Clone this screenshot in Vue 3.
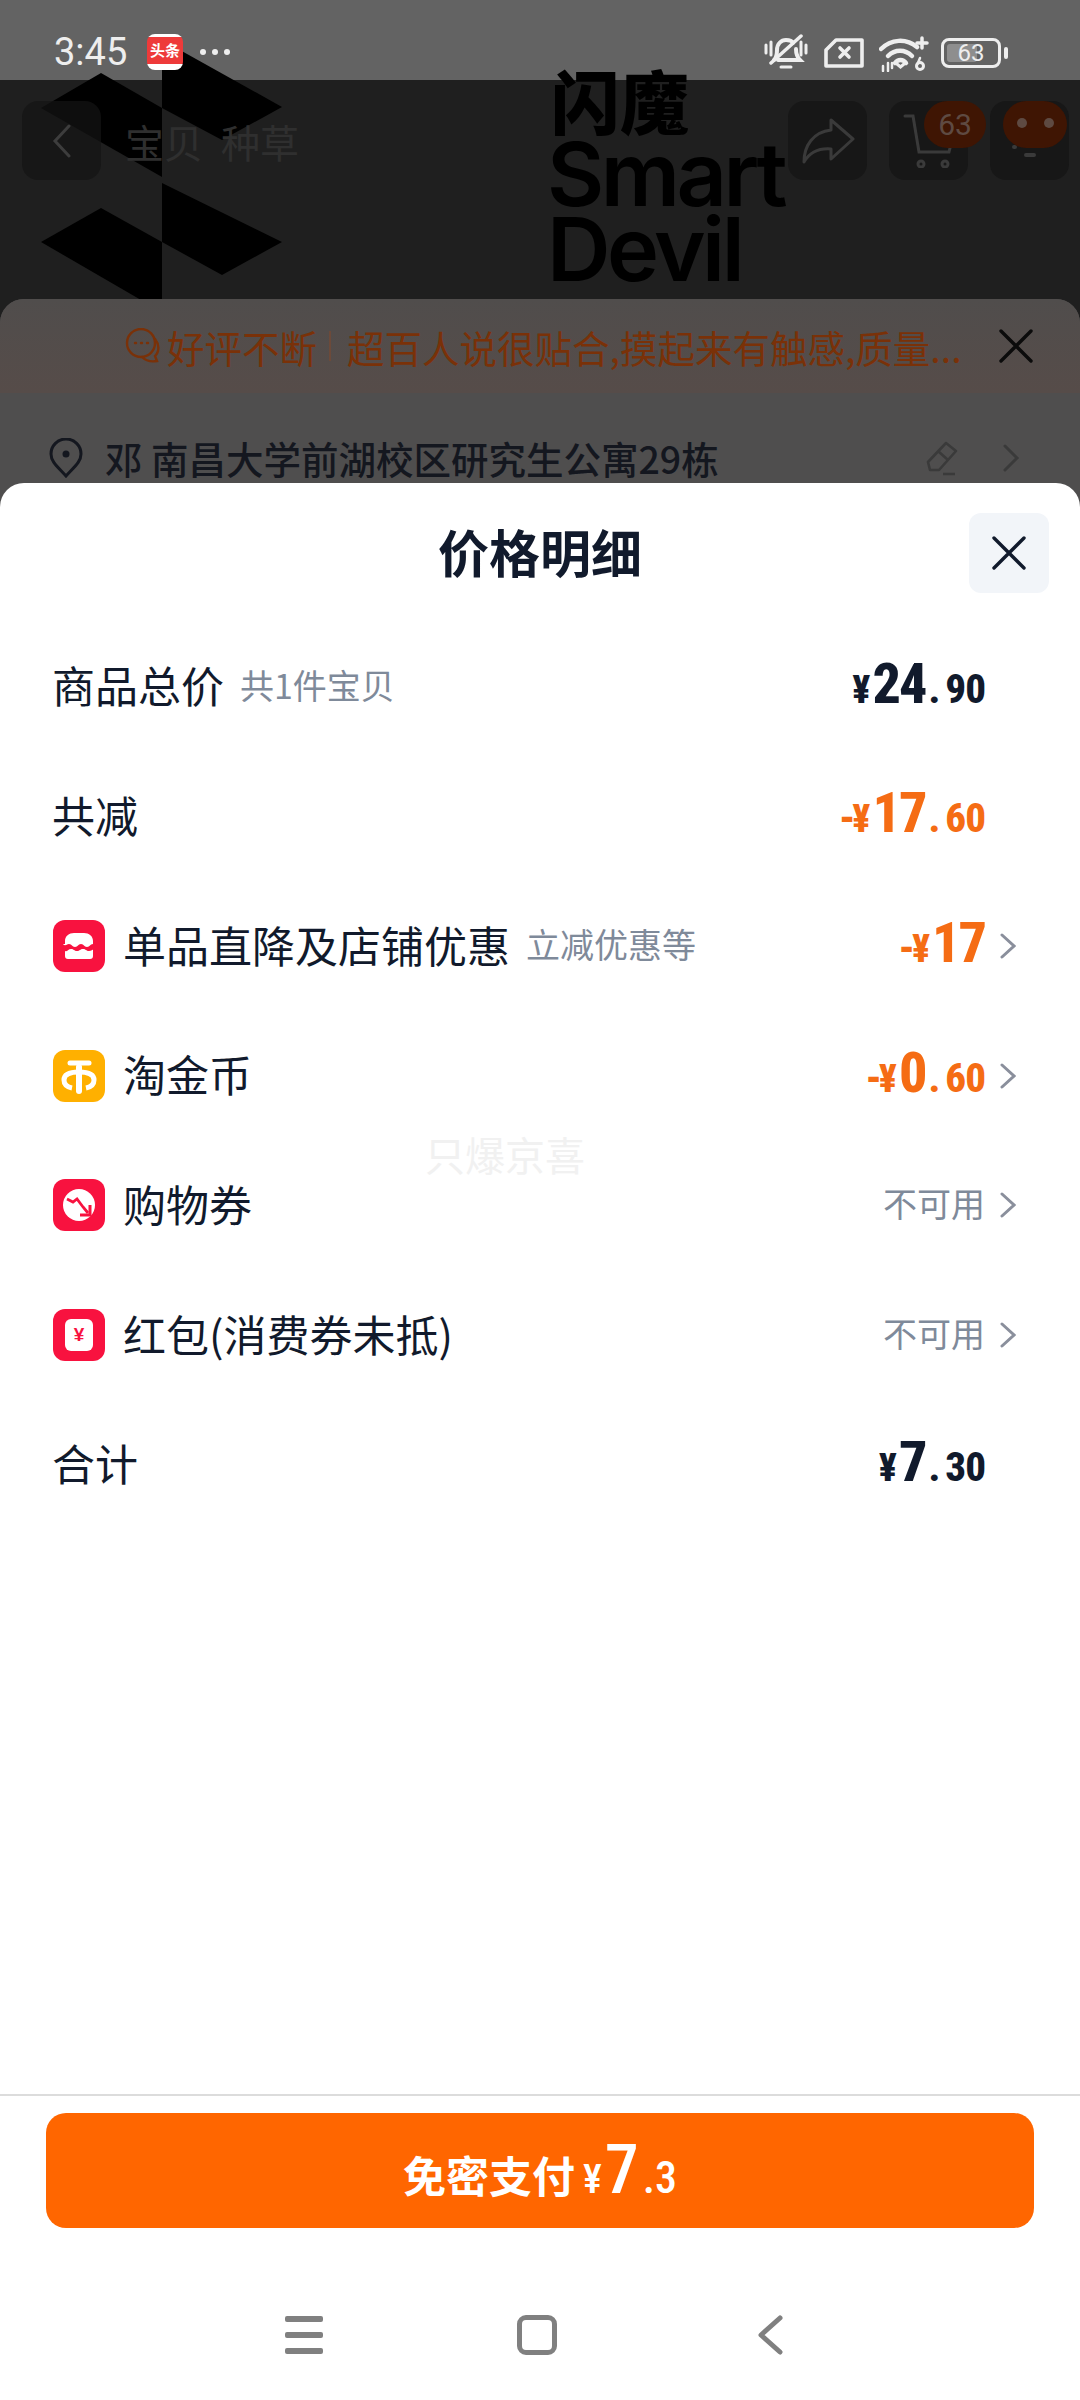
<template>
  <div class="page">
    <!-- LOGO BEHIND THE DIM LAYER -->
    <svg class="logo-mark" width="300" height="300" viewBox="0 0 300 300">
      <path d="M41 108 101 73 162 108V177Z" />
      <path d="M162 40 282 107 222 140 162 108Z" />
      <path d="M41 242 101 208 162 242V300H141Z" />
      <path d="M162 183 282 242 222 275 162 242Z" />
    </svg>
    <div class="logo-text">
      <div class="logo-cn">闪魔</div>
      <div>Smart</div>
      <div>Devil</div>
    </div>

    <!-- STATUS BAR -->
    <div class="status">
      <span class="time">3:45</span>
      <span class="app-badge"><span>头条</span></span>
      <span class="more"><i></i><i></i><i></i></span>
      <div class="status-right">
        <svg width="44" height="38" viewBox="0 0 44 38" fill="none" stroke="#eee" stroke-width="4" stroke-linecap="round">
          <path d="M2 11v8M42 11v8M7 8v13M37 8v13" stroke-width="3" />
          <path d="M10 26c3-3 3-6 3-10 0-6 4-10 9-10 3 0 6 1 7 3M32 15c0 5 1 8 4 11H14" />
          <path d="M17 33h10" stroke-width="3" />
          <path d="M7 29 37 2" stroke-width="3.5" />
        </svg>
        <svg width="40" height="31" viewBox="0 0 40 31" fill="none" stroke="#eee" stroke-width="3.6" stroke-linejoin="round">
          <path d="M2 13 12 3H38V29H2Z" />
          <path d="M16 11l9 9M25 11l-9 9" stroke-linecap="round" />
        </svg>
        <svg width="50" height="38" viewBox="0 0 50 38" fill="none" stroke="#eee" stroke-linecap="round">
          <path d="M2 15C12 5 27 4 38 13" stroke-width="4.5" />
          <path d="M9 22c7-7 17-7 24 0" stroke-width="4.5" />
          <path d="M16 29c3-4 8-4 11 0" stroke-width="4.5" />
          <path d="M18 30l3.5 3 3.500-3" stroke-width="3" />
          <path d="M38 9h10M43 4v10" stroke-width="3.5" />
          <path d="M4 32v5M9 29v8M13 29v5" stroke-width="2.5" />
          <circle cx="41" cy="32" r="3.500" stroke-width="3" />
          <path d="M41 24l-2.500 6" stroke-width="2.500" />
        </svg>
        <div class="battery">
          <span class="battery-fill"></span>
          <span class="battery-num">63</span>
        </div>
        <span class="battery-tip"></span>
      </div>
    </div>

    <!-- PAGE UNDER THE SHEET -->
    <div class="topbar">
      <div class="top-btn back">
        <svg width="26" height="34" viewBox="0 0 26 34" fill="none" stroke="#3d3d3d" stroke-width="3" stroke-linecap="round"><path d="M20 2 6 17l14 15" /></svg>
      </div>
      <div class="tabs"><span>宝贝</span><span>种草</span></div>
      <div class="top-btn">
        <svg width="54" height="46" viewBox="0 0 54 46" fill="none" stroke="#3a3a3a" stroke-width="3" stroke-linejoin="round"><path d="M30 2 52 21 30 41V31C18 30 9 34 3 44 3 28 12 14 30 12Z" /></svg>
      </div>
      <div class="top-btn cart">
        <svg width="52" height="54" viewBox="0 0 52 54" fill="none" stroke="#3a3a3a" stroke-width="3" stroke-linecap="round"><path d="M2 2h8l6 36h30l2-8" /><circle cx="18" cy="50" r="3" /><circle cx="42" cy="50" r="3" /></svg>
        <span class="badge">63</span>
      </div>
      <div class="top-btn msg">
        <svg width="60" height="60" viewBox="0 0 60 60" fill="none" stroke="#3a3a3a" stroke-width="4" stroke-linecap="round"><path d="M14 36h1M26 44h8" /></svg>
        <span class="badge blank"><i></i><i></i></span>
      </div>
    </div>

    <div class="under-card">
      <div class="review">
        <svg width="36" height="36" viewBox="0 0 36 36" fill="none" stroke="#7a3108" stroke-width="2.400" stroke-linecap="round"><circle cx="16" cy="15" r="14" /><path d="M30 11c4 5 5 12 0 17l2 5c-6 1-11 0-15-4" /><path d="M10 15h1M16 15h1M22 15h1" /></svg>
        <span class="review-tag">好评不断</span>
        <span class="review-line"></span>
        <span class="review-text">超百人说很贴合,摸起来有触感,质量...</span>
        <svg class="review-close" width="34" height="34" viewBox="0 0 34 34" stroke="#0b0b0b" stroke-width="3.400" stroke-linecap="round"><path d="M2 2 32 32M32 2 2 32" /></svg>
      </div>
      <div class="address">
        <svg width="36" height="40" viewBox="0 0 36 40" fill="none" stroke="#14171f" stroke-width="3"><path d="M18 38C10 29 3 24 3 16a15 15 0 0 1 30 0c0 8-7 13-15 22Z" /><circle cx="18" cy="16" r="3.500" fill="#14171f" stroke="none" /></svg>
        <span class="address-text">邓 南昌大学前湖校区研究生公寓29栋</span>
        <svg class="edit" width="34" height="36" viewBox="0 0 34 36" fill="none" stroke="#3a3a3a" stroke-width="2.600" stroke-linejoin="round"><path d="M21 3 31 11 14 30H5L3 22ZM13 11l10 9M18 34h12" /></svg>
        <svg class="addr-chev" width="18" height="28" viewBox="0 0 18 28" fill="none" stroke="#3a3a3a" stroke-width="3" stroke-linecap="round"><path d="M3 2 15 14 3 26" /></svg>
      </div>
    </div>

    <!-- PRICE SHEET -->
    <section class="sheet">
      <header class="sheet-head">
        <h2>价格明细</h2>
        <button class="sheet-close">
          <svg width="36" height="36" viewBox="0 0 36 36" stroke="#111a2c" stroke-width="3.400" stroke-linecap="round"><path d="M3 3 33 33M33 3 3 33" /></svg>
        </button>
      </header>

      <div class="rows">
        <div class="row" v-for="item in rows" :key="item.label">
          <span v-if="item.icon" class="ico" :class="item.icon">
            <svg v-if="item.icon === 'shop'" width="52" height="52" viewBox="0 0 52 52" fill="#fff">
              <path d="M12 24v-3c0-5 4-8 9-8h10c5 0 9 3 9 8v3c-3 0-3 3-6 3s-3-3-6-3-3 3-6 3-3-3-6-3-3 3-6 0Z" />
              <path d="M12 31c3 1 3-2 6-2s3 2 6 2 3-2 6-2 3 2 6 2 3-2 4-1v6c0 2-1 3-3 3H15c-2 0-3-1-3-3Z" />
            </svg>
            <svg v-else-if="item.icon === 'coin'" width="52" height="52" viewBox="0 0 52 52" fill="none" stroke="#fff" stroke-width="5">
              <path d="M17 13h19" stroke-linecap="round" />
              <path d="M19 38c-5-1-8-4-8-8 0-5 5-8 15-8s15 3 15 8c0 4-3 7-8 8" />
              <path d="M26 17v24" stroke-width="6" stroke-linecap="round" />
            </svg>
            <svg v-else-if="item.icon === 'ticket'" width="52" height="52" viewBox="0 0 52 52">
              <circle cx="26" cy="26" r="16" fill="#fff" />
              <path d="M14 20l6 3 4-3 6 8 5 6" fill="none" stroke="#f8123f" stroke-width="2.800" />
              <path d="M37 26v10h-10" fill="none" stroke="#f8123f" stroke-width="3" />
            </svg>
            <span v-else class="packet-card">¥</span>
          </span>

          <span class="label">{{ item.label }}</span>
          <span v-if="item.sub" class="sub">{{ item.sub }}</span>

          <span class="value" :class="{ 'no-chev': !item.chev }">
            <span v-if="item.text" class="muted">{{ item.text }}</span>
            <span v-else class="price" :class="{ off: item.off }">
              <span v-if="item.off" class="minus">-</span><span class="cur">¥</span><span class="int">{{ item.int }}</span><template v-if="item.dec"><span class="dot">.</span><span class="dec">{{ item.dec }}</span></template>
            </span>
          </span>
          <svg v-if="item.chev" class="chev" width="16" height="26" viewBox="0 0 16 26" fill="none" stroke="#8a8f9c" stroke-width="3" stroke-linecap="round"><path d="M2 2 14 13 2 24" /></svg>
        </div>
      </div>

      <div class="watermark">只爆京喜</div>

      <footer class="foot">
        <button class="pay">
          <span class="pay-label">免密支付</span>
          <span class="pay-cur">¥</span>
          <span class="pay-int">7</span>
          <span class="pay-dec">.3</span>
        </button>
        <nav class="sys-nav">
          <span class="nav-slot"><span class="burger"><i></i><i></i><i></i></span></span>
          <span class="nav-slot"><span class="square"></span></span>
          <span class="nav-slot">
            <svg width="26" height="40" viewBox="0 0 26 40" fill="none" stroke="#808080" stroke-width="5" stroke-linecap="round" stroke-linejoin="round"><path d="M23 3 4 20l19 17" /></svg>
          </span>
        </nav>
      </footer>
    </section>
  </div>
</template>

<script setup>
const rows = [
  { label: '商品总价', sub: '共1件宝贝', int: '24', dec: '90' },
  { label: '共减', off: true, int: '17', dec: '60' },
  { label: '单品直降及店铺优惠', sub: '立减优惠等', icon: 'shop', off: true, int: '17', chev: true },
  { label: '淘金币', icon: 'coin', off: true, int: '0', dec: '60', chev: true },
  { label: '购物券', icon: 'ticket', text: '不可用', chev: true },
  { label: '红包(消费券未抵)', icon: 'packet', text: '不可用', chev: true },
  { label: '合计', int: '7', dec: '30' }
]
</script>

<style scoped>
.page {
  position: relative;
  width: 1080px;
  height: 2400px;
  overflow: hidden;
  background: linear-gradient(#636363 80px, #1f1f1f 80px);
  font-family: "Noto Sans CJK SC", "Noto Sans", sans-serif;
  color: #111a2c;
}

/* LOGO */
.logo-mark {
  position: absolute;
  top: 0;
  left: 0;
  fill: #000;
}

.logo-text {
  position: absolute;
  top: 62px;
  left: 547px;
  font-family: Inter, sans-serif;
  font-weight: 600;
  font-size: 88px;
  line-height: 75px;
  letter-spacing: -3.500px;
  color: #000;
}

.logo-cn {
  font-family: "Noto Sans CJK SC", sans-serif;
  font-weight: 900;
  font-size: 69px;
  letter-spacing: 0;
  margin-left: 4px;
}

/* STATUS BAR */
.status {
  position: relative;
  height: 80px;
  display: flex;
  align-items: center;
  padding: 0 72px 0 54px;
  box-sizing: border-box;
  color: #eee;
}

.time {
  font-family: Roboto, sans-serif;
  font-size: 38px;
  width: 93px;
  margin-top: 23px;
}

.app-badge {
  width: 36px;
  height: 36px;
  margin-top: 23px;
  border-radius: 8px;
  background: linear-gradient(#fff 3px, #ee3a3a 3px, #ee3a3a 30px, #fff 30px);
  display: flex;
  align-items: flex-start;
  justify-content: center;
}

.app-badge span {
  color: #fff;
  font-size: 15px;
  font-weight: 700;
  line-height: 32px;
}

.more {
  display: flex;
  gap: 6px;
  margin: 23px 0 0 17px;
}

.more i {
  width: 6px;
  height: 6px;
  border-radius: 50%;
  background: #eee;
}

.status-right {
  display: flex;
  align-items: center;
  margin: 25px 0 0 auto;
}

.status-right svg:nth-child(2) {
  margin: 0 15px 0 16px;
}

.battery {
  position: relative;
  width: 60px;
  height: 30px;
  margin-left: 12px;
  border: 3px solid #eee;
  border-radius: 8px;
  box-sizing: border-box;
}

.battery-fill {
  position: absolute;
  top: 3px;
  left: 3px;
  width: 30px;
  height: 18px;
  border-radius: 3px;
  background: #8e8e8e;
}

.battery-num {
  position: absolute;
  inset: 0;
  text-align: center;
  font-family: Roboto, sans-serif;
  font-size: 24px;
  line-height: 24px;
  color: #eee;
}

.battery-tip {
  width: 4px;
  height: 12px;
  margin-left: 3px;
  border-radius: 2px;
  background: #eee;
}

/* PAGE UNDER THE SHEET */
.topbar {
  position: relative;
  display: flex;
  align-items: center;
  padding: 21px 11px 0 22px;
}

.top-btn {
  position: relative;
  width: 79px;
  height: 79px;
  border-radius: 16px;
  background: rgba(20, 20, 20, 0.7);
  display: flex;
  align-items: center;
  justify-content: center;
}

.tabs {
  display: flex;
  gap: 18px;
  margin: 0 auto 0 24px;
  color: #2f2f2f;
  font-size: 39px;
}

.cart {
  margin: 0 22px;
}

.badge {
  position: absolute;
  top: 0;
  right: -18px;
  width: 62px;
  height: 47px;
  border-radius: 24px;
  background: #3f1503;
  color: #5e4a42;
  font-family: Roboto, sans-serif;
  font-size: 30px;
  line-height: 47px;
  text-align: center;
}

.badge.blank {
  right: 2px;
  width: 64px;
  display: flex;
  justify-content: center;
  gap: 17px;
  padding-top: 17px;
  box-sizing: border-box;
}

.badge.blank i {
  width: 10px;
  height: 10px;
  border-radius: 50%;
  background: #5e4a42;
}

.under-card {
  position: relative;
  height: 400px;
  margin-top: 119px;
  border-radius: 24px 24px 0 0;
  background: #4f4e4e;
  overflow: hidden;
}

.review {
  display: flex;
  align-items: center;
  height: 94px;
  padding: 0 47px 0 125px;
  box-sizing: border-box;
  background: linear-gradient(#504d4c, #564c49);
  color: #7a3108;
  font-size: 37.500px;
}

.review-tag {
  margin-left: 6px;
  white-space: nowrap;
}

.review-line {
  width: 2px;
  height: 30px;
  margin: 0 16px 0 12px;
  background: #6c4a3a;
}

.review-text {
  white-space: nowrap;
  width: 620px;
}

.review-close {
  margin-left: auto;
}

.address {
  display: flex;
  align-items: center;
  margin-top: 37px;
  padding: 0 60px 0 48px;
  color: #14171f;
  font-size: 37.500px;
  font-weight: 500;
}

.address-text {
  margin-left: 21px;
  white-space: nowrap;
}

.edit {
  margin-left: auto;
}

.addr-chev {
  margin-left: 43px;
}

/* SHEET */
.sheet {
  position: absolute;
  top: 483px;
  left: 0;
  width: 1080px;
  height: 1917px;
  display: flex;
  flex-direction: column;
  border-radius: 24px 24px 0 0;
  background: #fff;
}

.sheet-head {
  position: relative;
  height: 139px;
  padding-bottom: 4px;
  box-sizing: border-box;
  display: flex;
  align-items: center;
  justify-content: center;
}

.sheet-head h2 {
  margin: 0;
  font-size: 51px;
  font-weight: 700;
}

.sheet-close {
  position: absolute;
  top: 30px;
  right: 31px;
  width: 80px;
  height: 80px;
  padding: 0;
  border: 0;
  border-radius: 12px;
  background: #f2f5f9;
  display: flex;
  align-items: center;
  justify-content: center;
}

.row {
  height: 129.67px;
  display: flex;
  align-items: center;
  padding: 0 64px 0 54px;
  box-sizing: border-box;
}

.ico {
  width: 52px;
  height: 52px;
  margin: 0 20px 0 -1px;
  border-radius: 12px;
  background: #f8123f;
  display: flex;
  align-items: center;
  justify-content: center;
}

.ico.coin {
  background: #ffb000;
}

.packet-card {
  width: 28px;
  height: 32px;
  border-radius: 6px;
  background: #fff;
  color: #f8123f;
  font-family: "Liberation Sans", sans-serif;
  font-size: 19px;
  font-weight: 700;
  line-height: 32px;
  text-align: center;
}

.label {
  margin: 0 0 5px -2px;
  font-size: 43px;
  white-space: nowrap;
}

.sub {
  margin: 0 0 5px 16px;
  font-size: 34px;
  color: #7f8a9a;
}

.value {
  margin: 0 0 6px auto;
}

.value.no-chev {
  margin-right: 31px;
}

.muted {
  font-size: 34px;
  color: #7f8a9a;
}

.price {
  font-family: Roboto, sans-serif;
  font-weight: 800;
  font-stretch: 75%;
  color: #111a2c;
  white-space: nowrap;
}

.price.off {
  color: #f56c14;
}

.minus {
  font-size: 42px;
  margin-right: -3px;
}

.cur {
  font-size: 38px;
  margin-right: 2px;
}

.int {
  font-size: 56px;
  letter-spacing: -2px;
}

.dot {
  font-size: 40px;
  margin: 0 5px 0 3px;
}

.dec {
  font-size: 41px;
  letter-spacing: -1px;
}

.chev {
  margin-left: 15px;
}

.watermark {
  position: absolute;
  top: 642px;
  left: 425px;
  font-size: 40px;
  color: #f1f1f1;
}

/* FOOTER */
.foot {
  margin-top: auto;
  border-top: 2px solid #dcdcdc;
  padding: 17px 46px 0;
}

.pay {
  width: 988px;
  height: 115px;
  padding: 0;
  border: 0;
  border-radius: 20px;
  background: #ff6600;
  color: #fff;
  display: flex;
  align-items: baseline;
  justify-content: center;
  line-height: 115px;
  font-family: "Noto Sans CJK SC", sans-serif;
}

.pay-label {
  font-size: 43px;
  font-weight: 700;
}

.pay-cur,
.pay-int,
.pay-dec {
  font-family: Roboto, sans-serif;
  font-weight: 500;
  font-stretch: 75%;
}

.pay-cur {
  font-size: 40px;
  margin-left: 8px;
}

.pay-int {
  font-size: 68px;
  margin-left: 3px;
}

.pay-dec {
  font-size: 44px;
  margin-left: 4px;
}

.sys-nav {
  display: flex;
  justify-content: center;
  height: 172px;
  padding: 87px 7px 0 0;
  margin: 0 -46px;
  box-sizing: border-box;
}

.nav-slot {
  width: 233px;
  height: 40px;
  display: flex;
  align-items: center;
  justify-content: center;
}

.burger {
  width: 38px;
  display: flex;
  flex-direction: column;
  gap: 10px;
}

.burger i {
  height: 6px;
  border-radius: 2px;
  background: #808080;
}

.square {
  width: 40px;
  height: 40px;
  box-sizing: border-box;
  border: 5px solid #808080;
  border-radius: 9px;
}
</style>
